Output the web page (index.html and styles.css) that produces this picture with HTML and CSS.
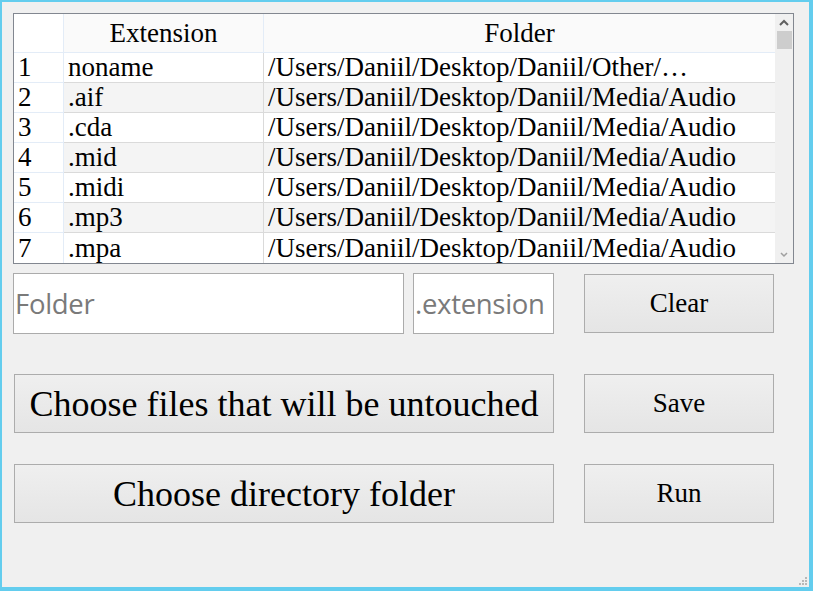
FILE: index.html
```html
<!DOCTYPE html>
<html>
<head>
<meta charset="utf-8">
<link rel="stylesheet" href="styles.css">
</head>
<body>
<div class="window">
  <div class="grid">
    <div class="cols">
      <div class="head">
        <div class="c num"></div>
        <div class="c ext center">Extension</div>
        <div class="c fld center">Folder</div>
      </div>
      <div class="row odd"><div class="c num">1</div><div class="c ext">noname</div><div class="c fld">/Users/Daniil/Desktop/Daniil/Other/…</div></div>
      <div class="row even"><div class="c num">2</div><div class="c ext">.aif</div><div class="c fld">/Users/Daniil/Desktop/Daniil/Media/Audio</div></div>
      <div class="row odd"><div class="c num">3</div><div class="c ext">.cda</div><div class="c fld">/Users/Daniil/Desktop/Daniil/Media/Audio</div></div>
      <div class="row even"><div class="c num">4</div><div class="c ext">.mid</div><div class="c fld">/Users/Daniil/Desktop/Daniil/Media/Audio</div></div>
      <div class="row odd"><div class="c num">5</div><div class="c ext">.midi</div><div class="c fld">/Users/Daniil/Desktop/Daniil/Media/Audio</div></div>
      <div class="row even"><div class="c num">6</div><div class="c ext">.mp3</div><div class="c fld">/Users/Daniil/Desktop/Daniil/Media/Audio</div></div>
      <div class="row odd last"><div class="c num">7</div><div class="c ext">.mpa</div><div class="c fld">/Users/Daniil/Desktop/Daniil/Media/Audio</div></div>
    </div>
    <div class="scrollbar">
      <svg class="arrow" width="18" height="16" viewBox="0 0 18 16"><path d="M5 11 L9 7 L13 11" fill="none" stroke="#606060" stroke-width="2"/></svg>
      <div class="thumb"></div>
      <div class="track"></div>
      <svg class="arrow" width="18" height="16" viewBox="0 0 18 16"><path d="M6 6 L9 9 L12 6" fill="none" stroke="#a0a0a0" stroke-width="1.5"/></svg>
    </div>
  </div>

  <div class="line line1">
    <div class="input folder"><span class="ph">Folder</span></div>
    <div class="input extension"><span class="ph">.extension</span></div>
    <div class="btn small clear">Clear</div>
  </div>
  <div class="line line2">
    <div class="btn big">Choose files that will be untouched</div>
    <div class="btn small">Save</div>
  </div>
  <div class="line line3">
    <div class="btn big">Choose directory folder</div>
    <div class="btn small">Run</div>
  </div>
  <svg class="grip" width="10" height="10" viewBox="0 0 10 10">
    <rect x="7" y="1" width="2" height="2" fill="#b8b8b8"/>
    <rect x="4" y="4" width="2" height="2" fill="#b8b8b8"/>
    <rect x="7" y="4" width="2" height="2" fill="#b8b8b8"/>
    <rect x="1" y="7" width="2" height="2" fill="#b8b8b8"/>
    <rect x="4" y="7" width="2" height="2" fill="#b8b8b8"/>
    <rect x="7" y="7" width="2" height="2" fill="#b8b8b8"/>
  </svg>
</div>
</body>
</html>
```

FILE: styles.css
```css
html, body {
  margin: 0;
  padding: 0;
}
body {
  width: 813px;
  height: 591px;
  overflow: hidden;
  font-family: "Liberation Serif", "Times New Roman", serif;
  color: #000;
}
.window {
  position: relative;
  box-sizing: border-box;
  width: 813px;
  height: 591px;
  background: #f0f0f0;
  border-style: solid;
  border-color: #63cdee;
  border-width: 2px 4px 4px 2px;
  padding: 11px 0 0 11px;
}
.grid {
  box-sizing: border-box;
  width: 781px;
  height: 251px;
  border: 1px solid #828790;
  background: #fff;
  display: flex;
}
.cols {
  width: 761px;
  display: flex;
  flex-direction: column;
}
.head, .row {
  display: flex;
  font-size: 27px;
}
.head {
  height: 39px;
  background: #fafafa;
  box-sizing: border-box;
  border-bottom: 1px solid #e3ecf7;
}
.row {
  height: 30px;
  box-sizing: border-box;
}
.c {
  box-sizing: border-box;
  white-space: nowrap;
  overflow: hidden;
  display: flex;
  align-items: center;
  padding-left: 4px;
}
.head .c {
  border-right: 1px solid #e3ecf7;
}
.head .c.fld { border-right: none; }
.center { justify-content: center; padding-left: 0; }
.num { width: 50px; border-right: 1px solid #e3ecf7; padding-left: 4px; background: #fff; }
.ext { width: 200px; border-right: 1px solid #dadada; }
.fld { width: 511px; }
.row .c { border-bottom: 1px solid #dadada; }
.row .c.num { border-bottom-color: #e3ecf7; border-right-color: #e3ecf7; }
.row.last .c { border-bottom: none; height: 30px; }
.even .ext, .even .fld { background: #f4f4f4; }
.odd .ext, .odd .fld { background: #fff; }
.scrollbar {
  width: 18px;
  background: #f0f0f0;
  display: flex;
  flex-direction: column;
}
.arrow { display: block; flex: none; }
.thumb {
  margin: 1px 1px 0 2px;
  height: 18px;
  background: #cdcdcd;
  flex: none;
}
.track { flex: 1; }

.line {
  display: flex;
  align-items: flex-start;
}
.line1 { margin-top: 9px; }
.line2 { margin-top: 40px; }
.line3 { margin-top: 31px; }
.input {
  box-sizing: border-box;
  height: 61px;
  background: #fff;
  border: 1px solid #ababab;
  display: flex;
  align-items: center;
  font-family: "Open Sans", "Noto Sans", sans-serif;
  color: #7a7a7a;
  font-size: 27.5px;
}
.ph { margin-top: -1px; letter-spacing: -0.3px; }
.folder { width: 391px; padding-left: 1px; }
.extension { width: 141px; margin-left: 9px; padding-left: 1px; }
.btn {
  box-sizing: border-box;
  height: 59px;
  border: 1px solid #acacac;
  background: linear-gradient(#efefef, #e5e5e5);
  display: flex;
  align-items: center;
  justify-content: center;
}
.small {
  width: 190px;
  margin-left: 30px;
  font-size: 27px;
}
.clear { margin-top: 1px; }
.big {
  width: 540px;
  margin-left: 1px;
  font-size: 36px;
}
.grip {
  position: absolute;
  right: 1px;
  bottom: 1px;
}
```
